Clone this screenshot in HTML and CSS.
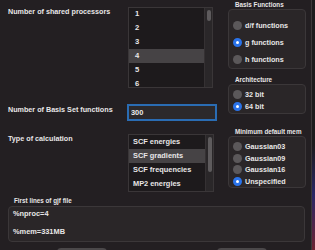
FILE: index.html
```html
<!DOCTYPE html>
<html>
<head>
  <meta name="viewport" content="width=device-width, initial-scale=1">
  <link rel="stylesheet" href="styles.css">
</head>
<body>

  <div class="window">
    <div class="main">
      <div class="left">
        <!-- Processors -->
        <div class="row row-proc">
          <span class="label">Number of shared processors</span>
          <div class="listbox proc-list">
            <ul>
              <li>1</li>
              <li>2</li>
              <li>3</li>
              <li class="selected">4</li>
              <li>5</li>
              <li>6</li>
            </ul>
            <div class="scrollbar"><div class="thumb proc-thumb"></div></div>
          </div>
        </div>
        <!-- Basis set size -->
        <div class="row row-basis">
          <span class="label">Number of Basis Set functions</span>
          <input class="textfield" type="text" value="300">
        </div>
        <!-- Calculation type -->
        <div class="row row-calc">
          <span class="label">Type of calculation</span>
          <div class="listbox calc-list">
            <ul>
              <li>SCF energies</li>
              <li class="selected">SCF gradients</li>
              <li>SCF frequencies</li>
              <li>MP2 energies</li>
            </ul>
            <div class="scrollbar"><div class="thumb calc-thumb"></div></div>
          </div>
        </div>
      </div>

      <div class="right">
        <div class="group">
          <div class="group-title">Basis Functions</div>
          <div class="group-box basis-box">
            <div class="radio"><span class="dot"></span>d/f functions</div>
            <div class="radio"><span class="dot on"></span>g functions</div>
            <div class="radio"><span class="dot"></span>h functions</div>
          </div>
        </div>
        <div class="group">
          <div class="group-title">Architecture</div>
          <div class="group-box arch-box">
            <div class="radio"><span class="dot"></span>32 bit</div>
            <div class="radio"><span class="dot on"></span>64 bit</div>
          </div>
        </div>
        <div class="group group-mem">
          <div class="group-title">Minimum default mem</div>
          <div class="group-box mem-box">
            <div class="radio"><span class="dot"></span>Gaussian03</div>
            <div class="radio"><span class="dot"></span>Gaussian09</div>
            <div class="radio"><span class="dot"></span>Gaussian16</div>
            <div class="radio"><span class="dot on"></span>Unspecified</div>
          </div>
        </div>
      </div>
    </div>

    <!-- Preview of the input file -->
    <div class="gjf">
      <div class="group-title gjf-title">First lines of gjf file</div>
      <div class="gjf-box">%nproc=4<br><br>%mem=331MB</div>
    </div>

    <div class="buttons">
      <div class="button"></div>
      <div class="button"></div>
    </div>
  </div>

</body>
</html>
```

FILE: styles.css
```css
/* Base styling */
body {
  margin: 0;
  padding: 0;
  width: 315px;
  height: 250px;
  overflow: hidden;
  font-family: "Liberation Sans", Arial, sans-serif;
  font-weight: bold;
  color: #e8e6e7;
  background: linear-gradient(to bottom, #1c1b1d 0%, #1c1b1d 58%, #2a2766 78%, #6e2232 100%);
}
/* Window area */
.window {
  width: 311px;
  height: 250px;
  background: #231f22;
  border-right: 1px solid #3c383a;
  overflow: hidden;
}
.main {
  display: flex;
  padding-top: 7px;
}
.left {
  width: 228px;
  padding-left: 8px;
  box-sizing: border-box;
}
.row {
  display: flex;
  align-items: flex-start;
}
.label {
  width: 120px;
  font-size: 7.2px;
  line-height: 10px;
  flex-shrink: 0;
}
/* List boxes */
.listbox {
  position: relative;
  background: #1d1a1c;
  border: 1px solid #3a3638;
  box-sizing: border-box;
  display: flex;
}
.listbox ul {
  list-style: none;
  margin: 0;
  padding: 0;
  flex: 1;
}
.listbox li {
  height: 14px;
  line-height: 14px;
  font-size: 7.4px;
  padding-left: 4px;
}
.listbox li.selected {
  background: #464345;
}
.proc-list {
  width: 85px;
  height: 81px;
  overflow: hidden;
}
.proc-list ul {
  margin-top: -1px;
}
.proc-list li {
  padding-left: 6px;
  font-size: 7.6px;
}
.calc-list {
  width: 86px;
  height: 58px;
  overflow: hidden;
}
.scrollbar {
  width: 8px;
  background: #2a2729;
  border-left: 1px solid #353133;
  flex-shrink: 0;
  padding: 2px 1px 0 2px;
  box-sizing: border-box;
}
.thumb {
  width: 4px;
  background: #5e5b5d;
  border-radius: 2px;
}
.proc-thumb {
  height: 11px;
}
.calc-thumb {
  height: 35px;
}
/* Text input with focus ring */
.row-basis {
  margin-top: 16px;
}
.row-basis .label {
  margin-top: 1px;
}
.textfield {
  width: 90px;
  height: 17px;
  margin: 0 0 0 -1px;
  padding: 0 2px;
  box-sizing: border-box;
  background: #2c292b;
  border: 2px solid #2a6cb3;
  outline: none;
  color: #ececec;
  font-family: "Liberation Sans", Arial, sans-serif;
  font-weight: bold;
  font-size: 7.4px;
}
.row-calc {
  margin-top: 13px;
}
/* Right column groups */
.right {
  width: 78px;
  margin-top: -6px;
}
.group-title {
  font-size: 6.3px;
  line-height: 8px;
  padding-left: 7px;
  height: 8px;
}
.group-box {
  background: #2a2628;
  border: 1px solid #3b3739;
  border-radius: 4px;
  margin-top: 0;
  box-sizing: border-box;
}
.basis-box {
  padding-top: 7px;
  height: 60px;
}
.basis-box .radio {
  height: 17px;
}
.group + .group {
  margin-top: 7px;
}
.arch-box {
  padding-top: 3px;
  height: 30px;
}
.arch-box .radio {
  height: 12px;
}
.group.group-mem {
  margin-top: 14px;
}
.mem-box {
  padding-top: 4px;
  height: 52px;
}
.mem-box .radio {
  height: 11.5px;
}
.radio {
  display: flex;
  align-items: center;
  gap: 3px;
  padding-left: 4px;
  font-size: 7.2px;
}
.dot {
  width: 9px;
  height: 9px;
  border-radius: 50%;
  background: #5b585a;
  box-sizing: border-box;
  flex-shrink: 0;
}
.dot.on {
  border: 3px solid #2a73ea;
  background: #ffffff;
}
/* gjf preview */
.gjf {
  margin-top: 5px;
  padding-left: 8px;
}
.gjf-title {
  padding-left: 6px;
}
.gjf-box {
  width: 297px;
  height: 36px;
  margin-top: 1px;
  padding: 2px 4px;
  box-sizing: border-box;
  background: #2a2628;
  border: 1px solid #3b3739;
  border-radius: 4px;
  font-size: 7.4px;
  line-height: 9px;
}
/* Dialog buttons, cut off at the bottom */
.buttons {
  display: flex;
  gap: 110px;
  padding-left: 57px;
  margin-top: 6px;
}
.button {
  width: 50px;
  height: 20px;
  background: #4b484a;
  border-radius: 4px;
}
```
